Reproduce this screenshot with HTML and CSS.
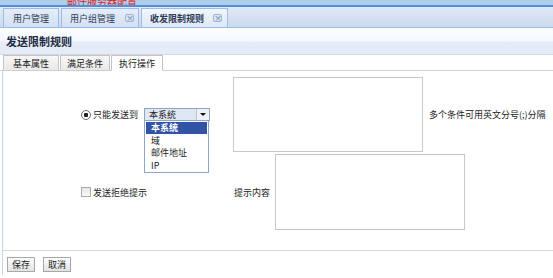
FILE: index.html
```html
<!DOCTYPE html>
<html lang="zh-CN">
<head>
    <meta charset="UTF-8">
    <title>发送限制规则</title>
    <link rel="stylesheet" href="styles.css">
</head>
<body>
    <div class="topbar">
        <a class="top-link" href="#">邮件服务器配置</a>
    </div>

    <div class="tabbar">
        <div class="tab">用户管理</div>
        <div class="tab closable">用户组管理<span class="tab-close">×</span></div>
        <div class="tab closable active">收发限制规则<span class="tab-close">×</span></div>
    </div>

    <div class="panel-header">发送限制规则</div>

    <div class="subtabs">
        <div class="subtab first">基本属性</div>
        <div class="subtab">满足条件</div>
        <div class="subtab active">执行操作</div>
    </div>

    <div class="content">
        <div class="row row-first">
            <label class="choice">
                <input type="radio" class="radio" checked>
                <span>只能发送到</span>
            </label>
            <div class="select">
                <span class="select-value">本系统</span>
                <span class="select-arrow"></span>
                <ul class="select-list">
                    <li class="selected">本系统</li>
                    <li>域</li>
                    <li>邮件地址</li>
                    <li>IP</li>
                </ul>
            </div>
            <textarea class="area area-first"></textarea>
            <span class="hint">多个条件可用英文分号(;)分隔</span>
        </div>

        <div class="row row-second">
            <label class="choice choice-wide">
                <input type="checkbox" class="check">
                <span>发送拒绝提示</span>
            </label>
            <span class="field-label">提示内容</span>
            <textarea class="area"></textarea>
        </div>

        <div class="actions">
            <button class="btn">保存</button>
            <button class="btn">取消</button>
        </div>
    </div>
</body>
</html>
```

FILE: styles.css
```css
* {
    margin: 0;
    padding: 0;
    box-sizing: border-box;
}

body {
    font-family: "Noto Sans CJK SC", "DejaVu Sans", sans-serif;
    font-size: 9px;
    color: #222;
    background: white;
    width: 553px;
    height: 278px;
    overflow: hidden;
}

.topbar {
    height: 7px;
    background: #afcde9;
    border-bottom: 2px solid #4f8fdc;
    display: flex;
    align-items: flex-end;
    overflow: hidden;
    padding-left: 67px;
}

.top-link {
    color: #e0201a;
    font-size: 10px;
    line-height: 10px;
    display: block;
    margin-bottom: -1px;
}

.tabbar {
    height: 21px;
    background: linear-gradient(#e1e9f7, #cbdaef);
    border-bottom: 1px solid #99bbe8;
    display: flex;
    align-items: flex-end;
    padding-left: 3px;
    gap: 2px;
}

.tab {
    height: 19px;
    border: 1px solid #9ebde3;
    border-bottom: none;
    background: linear-gradient(#e5edf8, #d3e0f2);
    color: #2c3b57;
    display: flex;
    align-items: center;
    padding: 0 9px;
}

.tab.closable {
    padding-left: 8px;
    padding-right: 4px;
    gap: 10px;
}

.tab.active {
    background: linear-gradient(#f2f6fc, #dfe8f5);
    font-weight: bold;
    padding-right: 5px;
    gap: 9px;
}

.tab-close {
    width: 9px;
    height: 8px;
    border: 1px solid #9db4d6;
    border-radius: 2px;
    background: #dce6f4;
    color: #5a77a8;
    font-size: 8px;
    font-weight: normal;
    line-height: 5px;
    text-align: center;
}

.panel-header {
    height: 27px;
    background: linear-gradient(#fbfdff 0%, #f3f8fe 50%, #e5ecf7 55%, #e5ecf7 100%);
    border-bottom: 1px solid #d5d9df;
    font-size: 11px;
    font-weight: bold;
    color: #1f2a44;
    display: flex;
    align-items: center;
    padding-left: 6px;
}

.subtabs {
    height: 16px;
    display: flex;
    align-items: flex-end;
    border-bottom: 1px solid #cfcfcf;
    padding-left: 3px;
    gap: 1px;
}

.subtab {
    height: 16px;
    border: 1px solid #c4c4c4;
    border-bottom: 1px solid #cfcfcf;
    background: linear-gradient(#f7f7f7, #e9e9e9);
    display: flex;
    align-items: center;
    padding: 0 6px;
    margin-bottom: -1px;
}

.subtab.first {
    padding: 0 9px;
}

.subtab.active {
    background: white;
    border-bottom-color: white;
    padding: 0 7px;
}

.content {
    margin-left: 2px;
    border-left: 1px solid #c6d6ec;
    height: 204px;
    padding-top: 6px;
}

.row {
    display: flex;
    align-items: center;
    padding-left: 78px;
}

.row-second {
    margin-top: 2px;
}

.choice {
    display: flex;
    align-items: center;
    gap: 2px;
}

.choice-wide {
    width: 152px;
}

.radio {
    appearance: none;
    width: 10px;
    height: 10px;
    border: 1px solid #6d6d6d;
    border-radius: 50%;
    background: radial-gradient(circle, #222 0 2px, #fff 2.5px);
}

.check {
    appearance: none;
    width: 10px;
    height: 10px;
    border: 1px solid #a9a9a9;
    background: linear-gradient(#e6e6e6, #fafafa);
}

.select {
    position: relative;
    margin-left: 6px;
    width: 66px;
    height: 13px;
    border: 1px solid #8aa6c8;
    background: #dfe7f2;
    display: flex;
    align-items: center;
}

.select-value {
    flex: 1;
    padding-left: 4px;
    line-height: 11px;
}

.select-arrow {
    width: 13px;
    height: 11px;
    border-left: 1px solid #b8c5d6;
    background: #eef1f5;
    position: relative;
}

.select-arrow::after {
    content: "";
    position: absolute;
    left: 3px;
    top: 4px;
    border-left: 3px solid transparent;
    border-right: 3px solid transparent;
    border-top: 3px solid #111;
}

.select-list {
    position: absolute;
    left: -1px;
    top: 11px;
    width: 65px;
    list-style: none;
    background: white;
    border: 1px solid #8aa6c8;
    padding: 1px 1px 0;
    z-index: 2;
}

.select-list li {
    height: 12px;
    line-height: 12px;
    padding-left: 5px;
    margin-bottom: 0.5px;
}

.select-list li.selected {
    background: #3354a6;
    color: white;
    font-weight: bold;
}

.area {
    width: 190px;
    height: 76px;
    border: 1px solid #c8c8c8;
    resize: none;
    background: white;
    outline: none;
}

.area-first {
    margin-left: 23px;
    height: 75px;
}

.hint {
    margin-left: 6px;
    white-space: nowrap;
}

.field-label {
    margin-left: 1px;
    margin-right: 5px;
}

.actions {
    margin-top: 20px;
    border-top: 1px solid #d9d9d9;
    padding-top: 6px;
    padding-left: 4px;
    display: flex;
    gap: 8px;
}

.btn {
    font-family: inherit;
    font-size: 9px;
    height: 15px;
    padding: 0 4px;
    border: 1px solid #a8a8a8;
    background: linear-gradient(#fdfdfd, #e3e3e3);
    color: #222;
}
```
